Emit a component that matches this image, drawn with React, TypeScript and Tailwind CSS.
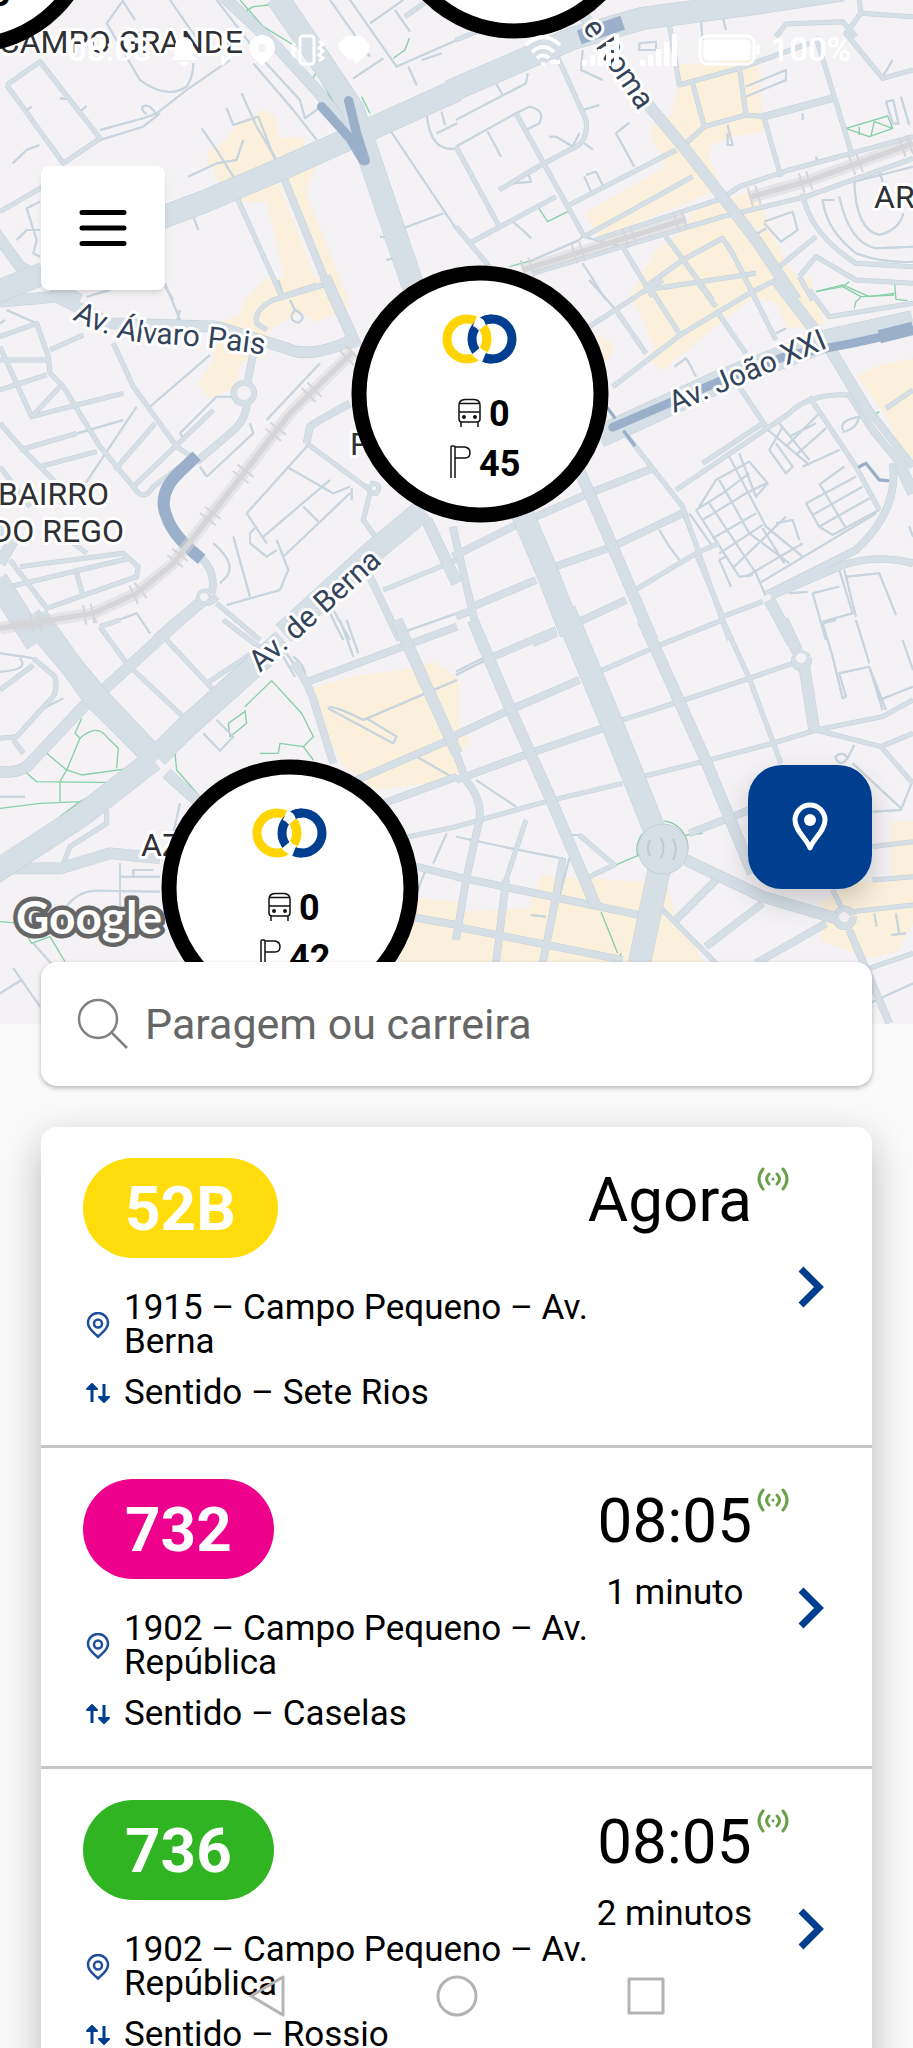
import { useState } from "react";

interface Departure {
  line: string;
  badge: string;
  time: string;
  wait?: string;
  stop: string;
  direction: string;
}

interface StopCluster {
  x: number;
  y: number;
  buses: number;
  stops: number;
}

interface MapTile {
  x: number;
  y: number;
  areas: string[];
  paths?: string[];
  lanes: string[];
  streets: string[];
  avenues: string[];
  roads: string[];
  mains: string[];
  rails?: string[];
  tunnels?: [string, number][];
}

const departures: Departure[] = [
  {
    line: "52B",
    badge: "bg-[#ffdc0a]",
    time: "Agora",
    stop: "1915 – Campo Pequeno – Av. Berna",
    direction: "Sete Rios",
  },
  {
    line: "732",
    badge: "bg-[#ec008c]",
    time: "08:05",
    wait: "1 minuto",
    stop: "1902 – Campo Pequeno – Av. República",
    direction: "Caselas",
  },
  {
    line: "736",
    badge: "bg-[#30b422]",
    time: "08:05",
    wait: "2 minutos",
    stop: "1902 – Campo Pequeno – Av. República",
    direction: "Rossio",
  },
];

const clusters: StopCluster[] = [
  { x: -30, y: -76, buses: 0, stops: 45 },
  { x: 514, y: -90, buses: 0, stops: 38 },
  { x: 480, y: 394, buses: 0, stops: 45 },
  { x: 290, y: 888, buses: 0, stops: 42 },
];

// Tile geometry is stored at three times the map's own scale
const tiles: MapTile[] = [
  {
    x: 0,
    y: 0,
    areas: [
      "M720 370L790 335L820 350L835 420L910 415L910 445L720 540L660 550L645 500L625 490L630 455L680 425Z",
      "M690 600L830 545L945 850L930 900L740 900L800 860L860 850L830 700L800 600Z",
      "M865 530L945 500L910 570L1040 900L1000 900Z",
    ],
    paths: [
      "M720 0L790 80L885 138M735 35L760 20L805 15M930 250L950 215L1025 355L1050 355M950 215L920 170M1180 175L1215 150L1228 115M1085 290L1110 340",
    ],
    lanes: [
      "M300 390L430 355L470 340L560 270L690 180M300 420L430 380L480 340M470 345Q450 310 430 318Q420 330 440 342",
      "M38 490L80 450L118 435M605 385L650 450L700 530M565 530L650 490L710 480L730 420",
      "M680 325L700 375L775 350L825 480M725 280L770 380L830 480M370 0L320 70L420 240Q500 300 560 260Q580 230 580 190",
      "M370 5L405 60M510 0L600 130M650 0L780 170L900 300L915 355L990 300M760 190L880 330L950 420",
      "M1050 0L1190 200L1371 120M1110 70L1210 0M1060 235L1150 175M1185 30L1230 95M1225 200L1250 255M990 0L1110 170",
      "M1170 390L1371 690M1210 685L1330 640M1280 340Q1290 460 1371 445M1310 400L1371 370M1325 335L1335 375",
      "M120 605L80 625L110 720L100 760L120 770M50 720L80 690L120 690M580 650L595 690M495 860L520 900M180 295L200 297M80 330L95 320M240 335L260 318",
      "M1140 710L1155 712M1160 780L1180 775M1265 180L1325 160",
    ],
    streets: [
      "M20 255L190 490L300 415L120 185L20 255M0 635L130 560M710 590L845 890L950 855M1371 -60L1215 50",
    ],
    avenues: ["M850 530L1000 900"],
    roads: ["M670 -10L830 140L950 270L1070 420", "M-20 690L60 800L240 900M-20 890L160 820"],
    mains: ["M480 655L600 610L860 500L1050 415L1371 270", "M830 -10L960 180L1060 330L1100 450L1240 860"],
    tunnels: [
      ["M965 320L1050 415L1090 482", 28],
      ["M1046 302L1070 400L1096 482", 28],
    ],
  },
  {
    x: 456,
    y: 0,
    areas: [
      "M670 200L900 180L920 390L830 405L760 430L755 480L790 560L700 600L430 710L395 640L640 500L600 430L590 385L650 350L665 280Z",
      "M710 640L880 580L920 640L980 780L1030 850L1000 890L520 900L600 760L690 690Z",
    ],
    paths: [
      "M245 620L275 665L335 635M1170 385L1295 348L1310 385L1240 410ZM1210 380L1210 405M1255 365L1245 408M1255 365L1310 385",
      "M1080 875L1160 855L1240 890L1315 880M160 800L235 780",
    ],
    lanes: [
      "M0 360L210 250L215 220M120 250L140 285M0 440L180 340L220 320Q270 330 250 370L210 390M95 395L135 470",
      "M380 330L430 315M385 430L410 448M280 410L300 410L350 440L370 400M480 400L520 368M480 400L535 500M390 525L420 515L440 555M385 530L405 575",
      "M130 570L215 515L225 545L175 550M170 665L200 690L225 715M380 150L375 210L440 240M550 130L600 125L600 150L550 150Z",
      "M735 60L740 120M800 50L810 90M815 375L830 435L815 435L815 400M870 290L990 240L990 210L870 260M1040 340L1040 360M1080 470L1085 490",
      "M1290 305L1310 370L1328 372L1312 300L1290 305M1335 290L1360 375M1135 600L1100 600Q1110 690 1200 760Q1280 790 1371 785",
      "M1150 590Q1180 730 1260 745L1371 740M1195 545Q1200 690 1270 705Q1330 690 1342 640M925 665L1010 635L1025 690L975 725L925 670M890 710L930 685",
      "M380 790L450 900M230 780L370 720L385 700M1195 545L1371 500M1270 510L1280 545M1280 230L1310 180M500 740L420 720L380 710",
    ],
    streets: [
      "M300 160L390 360Q400 430 340 450L255 495L130 570M0 440L130 680M40 730L300 590M0 680L100 800M180 340L385 710M330 620L660 450",
      "M640 70L670 255L850 205L1060 130M710 250L745 380L690 430M745 380L870 345L850 200M870 345L930 350M920 340L975 530M1080 110L1190 470",
      "M385 710L710 530M420 720L800 595L850 560L1000 510L1371 410M230 820L800 650L1050 590L1371 475M500 740L590 890M630 710L770 900M900 820L570 870",
      "M960 110L990 72L1160 65L1200 110M1210 0L1215 40L1371 50M1215 40L1170 100L1280 235L1371 210M1040 580Q1060 700 1200 790L1371 800",
      "M1030 830L1080 770L1200 840L1371 850M1030 830L1070 900M970 800L1080 710M570 860L680 780L800 715L830 760L900 900M0 120L150 60",
    ],
    avenues: ["M925 350L1130 295"],
    roads: ["M350 0L540 270L690 450L900 720L1020 900"],
    mains: ["M-20 275L350 115L560 55L900 10L1160 -30"],
    rails: ["M200 810L690 658", "M880 592L1050 545L1371 430"],
    tunnels: [["M370 112L500 68", 44]],
  },
  {
    x: 0,
    y: 280,
    areas: ["M740 60L800 0L1000 0L1045 80L950 120L900 90L800 150L790 230L720 240L700 320L630 350L600 310L650 240L640 140L720 110Z"],
    lanes: [
      "M620 590L600 560M620 590L760 460L750 430M800 420L960 250M450 380L630 225M540 460L650 350L700 350M540 460L550 475",
      "M920 500L740 700L800 790M750 760L750 790L800 830L830 810M750 760L765 745M1050 620L1000 640L860 560M1055 625L1055 660M990 600L790 770M910 680L960 730M850 830L1050 640M830 780L865 870L840 930L680 975",
      "M700 770L750 950M640 790Q710 850 680 890L660 910M300 1040L410 1000L450 1060M300 1040L330 1080M990 1000L1030 1080M1000 990L1050 1080",
      "M20 90L110 130M0 130L15 120M495 10L540 120M540 90L530 130M260 50L330 30M60 510L370 420M250 620L410 380M1200 1060L1371 1000",
      "M835 0L850 50L930 20M870 60L885 90Q860 120 895 128Q925 110 885 90",
    ],
    streets: [
      "M340 190L400 320L530 500L590 540M0 170L110 130L145 230L150 280L190 320L300 500L400 620Q430 670 460 620L540 560M0 240L140 240M0 330L140 285M150 210L250 165",
      "M0 200L95 410L180 320M95 410L230 375L370 340M0 430L70 510L200 640M60 510L230 460M120 560L290 515M345 570L465 430M400 620L640 390",
      "M30 840L140 985L410 890L415 860L370 820L60 860M30 920L240 870L390 835M230 880L250 950M650 970L780 1080M800 150L770 130Q760 90 820 60L970 15",
      "M920 490L1110 630M1110 640L1090 720L1140 790M1110 610Q1150 610 1130 640Q1100 640 1110 615M1150 930L1371 840M0 560L90 680M220 790L260 820",
    ],
    avenues: [
      "M760 220L740 320M740 370Q740 420 690 460L590 545M920 490L930 440L960 420L1050 370M1100 870L1200 1080M732 312A28 28 0 1 1 731 312M605 835Q650 880 635 940M635 940Q600 930 600 955Q620 980 650 950",
    ],
    roads: [
      "M0 65L170 50L330 130L650 140L860 205Q930 240 1070 175M975 -10L1070 200M610 960L470 1080M1280 720L1371 910M0 850L40 780L0 740",
    ],
    mains: ["M-20 40L130 -20M1270 690L1130 805L850 1060M-10 900L110 1090"],
    rails: ["M1060 215L870 400L700 620L520 850L410 940L280 1000L0 1045"],
    tunnels: [["M590 528L540 575Q470 640 500 710Q520 770 605 838", 36]],
  },
  {
    x: 456,
    y: 280,
    areas: [
      "M540 60L650 0L1060 0L1100 130L1000 140L960 60L880 50L620 265L590 240L600 200L560 110Z",
      "M1210 290L1260 265L1371 240L1371 540L1340 500L1290 400Z",
      "M430 170L470 200L450 240Z",
    ],
    paths: ["M1080 35L1160 20L1215 50L1315 45M1195 85L1200 65L1215 52M1160 20L1180 5M1315 0L1320 58L1355 62M1240 415L1270 395"],
    lanes: [
      "M720 690L800 640L880 580M740 720L870 640L930 610M770 775L900 700M790 820L920 735M830 865L990 710M870 890L1040 790M910 910L1260 700",
      "M720 690L850 890L890 885M760 670L900 880L930 950M790 600L880 760L1000 850M820 530L930 740L1040 830M850 520L900 650L935 610L880 545L780 600L730 680",
      "M790 840L825 920M790 840L810 830M940 510L990 580L1010 560L960 490M940 510L980 440M1000 470L1080 430M990 500L1090 400M1020 525L1110 445M1040 560L1150 510",
      "M930 445L1060 555M970 430L1060 540M1000 400M1050 670L1090 740L1130 765L1270 690M1050 670L1200 590M1090 610L1170 745M1070 705L1220 620M1090 740L1240 655M1095 610L1165 560",
      "M610 750L640 800L670 840M1150 870L1190 1000L1100 1025M1070 940L1150 920M1070 940L1110 1080M1170 890L1270 880L1320 1005M1165 870L1200 1010M1055 935L1000 940",
      "M700 250L720 290M655 260L690 235L700 250M1160 450Q1150 420 1210 410Q1200 450 1160 455M960 160L990 145M400 0L480 90M680 700L720 800M700 700L770 800M1360 740L1371 770",
      "M960 730L1010 720L1030 780M920 745L985 850",
    ],
    streets: [
      "M500 450L680 680L820 1080M470 320L680 160L880 40L960 0M400 140L570 30L620 0M580 20L670 160M720 0L780 80M480 90L570 220M870 0L960 180M780 90L870 220M850 320L930 440",
      "M660 630L1000 400Q1060 340 1180 345M740 550L920 430M1060 350L1200 560L1270 690M520 940L720 820L790 790M720 820L800 1010M800 1010L920 965M1060 30L1120 110L1371 70M1290 385L1371 330",
    ],
    avenues: [
      "M-10 830L170 740L400 640L590 565M270 870L470 800L680 700M-10 740L60 1040L90 1100M50 980L240 900M360 1030L510 960M0 1010L50 990M940 950L1150 860Q1250 820 1371 850",
      "M1180 340L1250 450L1340 560M1200 340L1371 560M1310 550Q1330 690 1200 810L930 945M230 1090L300 1060",
    ],
    roads: ["M370 570L470 800L590 1080M960 0L1130 220L1250 420M1330 550L1371 640M940 960L1010 1090"],
    mains: ["M430 470L800 300L1100 185L1371 125M190 680L275 880L345 1060"],
    tunnels: [
      ["M470 442L800 300L1000 225L1190 190L1371 150", 26],
      ["M1270 170L1371 145", 40],
      ["M1210 560L1230 550L1270 600L1295 602", 10],
      ["M505 455L535 495M455 385L475 412", 10],
    ],
  },
  {
    x: 0,
    y: 620,
    areas: [
      "M930 210L1080 170L1240 150L1300 130L1371 180L1371 480L1240 490L1130 505L1030 430L980 330Z",
      "M1250 840L1371 850L1371 1030L1210 1030L1200 960Z",
    ],
    paths: [
      "M735 260L815 182L905 280L940 350L910 380L840 370L835 400L780 400M910 380L940 420M735 270L740 310L690 350L685 310L735 275",
      "M525 400L530 450L600 530M245 295L225 340L240 355L200 450L180 485L180 545M240 355Q290 310 320 350L355 385L350 445M140 400L200 450L245 465L390 445",
      "M70 450L110 485L350 488L390 450M0 565L120 550L240 545L350 488M80 690L75 660L120 650L180 590L240 545M0 905L60 910L95 970L150 950L195 1025",
    ],
    lanes: [
      "M610 340L660 392L700 350L650 300M0 100L100 115M60 115Q90 150 0 155M110 275L190 235M400 770L400 750L460 750M360 730L360 860M360 770L480 770M0 530L75 530M540 550L520 640",
      "M180 890Q220 810 300 812L480 815M40 1045L120 1160M0 1120L65 1080M100 970L180 1060M985 265Q990 250 1090 300L1371 180M985 265L1180 370L1190 350L1100 295M1250 410L1371 480",
      "M860 100L920 190M880 110Q920 140 915 175M1020 0L1060 110M1040 0L1075 100M1280 740L1250 820M1340 640L1300 730M850 110L885 170",
    ],
    streets: [
      "M500 60L640 210M400 150L560 300M620 190L770 90M300 20L380 130M300 20L360 0M670 0L790 90M100 115L165 170Q175 220 150 240L50 350L0 355M40 360L70 400M0 210L100 135",
      "M190 730L210 680L320 610L320 570M1180 660L1371 620",
    ],
    avenues: ["M1070 480L1371 350M910 190L1371 20M1150 550L1371 470M1250 740L1371 770M1230 890L1371 915M880 130Q930 190 950 270L1000 430"],
    roads: [
      "M540 0L310 210M260 250L80 440Q50 460 0 455M0 745L180 745L330 700L480 715M500 460L600 550M1190 0L1371 400",
    ],
    mains: ["M110 -10L280 230L460 410", "M470 410L560 320L850 60M460 420L240 590L-20 760", "M90 -10L300 240L470 420"],
  },
  {
    x: 456,
    y: 620,
    areas: [
      "M0 880L230 870L230 840L260 770L400 780L550 790L630 800L650 880L740 1030L0 1030Z",
      "M1310 610L1371 610L1371 900L1320 990L1240 1010L1100 960L1100 850L1200 790L1310 790Z",
      "M0 280L10 340L40 360L0 400Z",
    ],
    paths: [
      "M625 603A80 80 0 0 1 695 690M690 645L740 640M545 710A80 80 0 0 1 560 640M480 735L550 705M435 875L485 1000M495 1000L490 1020",
    ],
    lanes: [
      "M1100 10L1130 110L1160 235L1170 230L1150 160L1240 140L1280 270M1200 0L1240 130M1240 140L1290 270M1270 240L1371 200M1340 60L1371 150M1100 10L1140 0",
      "M60 480L180 560M1190 430L1335 565M1138 410Q1160 390 1175 415Q1150 445 1138 410M1195 375L1175 415M1320 880L1330 945M1305 945L1350 940M1255 880L1262 920M225 885L270 890M0 650L140 680L330 718",
      "M0 165L90 120M0 155L80 115M340 645L370 645L475 735M210 600L150 780M325 715L295 830M340 715L310 830M1250 575L1335 570L1371 480M1240 1150L1371 1090",
    ],
    streets: [
      "M430 155L600 80L800 0M500 300L670 245L880 175L1010 130M560 470L740 425L950 370L1080 330L1280 290L1371 240M800 0L880 175L975 430M0 620L270 545L500 490",
      "M1080 330L1275 380L1371 340M1275 380L1371 490M610 860L780 1030M1240 1045L1371 1000M1190 875L1371 855M1130 810L1160 870M1250 680L1371 665M1250 780L1371 770M210 600L150 780M400 770L475 735L370 645",
    ],
    avenues: [
      "M100 115L300 30M0 345L150 275L370 180M0 480L220 400L440 325M0 400L30 480Q80 540 70 600L30 780L0 960M0 770L550 885M0 920L500 1020M150 780L120 1030M320 715L300 830L260 1030",
      "M700 640L830 590L880 570M780 780L660 900M920 850L750 980M1110 910L900 1030M1180 930L1300 1210M1055 115A20 20 0 1 1 1054 113M1190 890A25 25 0 1 1 1189 886",
    ],
    roads: ["M50 0L160 260L290 550L420 860M560 0L740 400L890 760M980 0L1025 95M1045 140L1075 330M690 720L920 830L1140 895M610 740L545 1040"],
    mains: ["M325 -30L480 340L600 640L610 700", "M620 700L550 1030"],
  },
];

const layers: { key: "lanes" | "streets" | "avenues" | "roads" | "mains"; width: number }[] = [
  { key: "lanes", width: 6 },
  { key: "streets", width: 12 },
  { key: "avenues", width: 20 },
  { key: "roads", width: 32 },
  { key: "mains", width: 66 },
];

function BusIcon() {
  return (
    <g fill="none" stroke="#111" strokeWidth="1.5">
      <path d="M-21 11Q-21 6 -15 5.500H-6Q0 6 0 11V25Q0 28 -3 28H-18Q-21 28 -21 25ZM-21 9.500H0M-21 18H0M-19 28V33M-2 28V33" />
      <circle cx="-16" cy="23" r="1.200" fill="#111" />
      <circle cx="-5" cy="23" r="1.200" fill="#111" />
    </g>
  );
}

function Cluster({ x, y, buses, stops }: StopCluster) {
  return (
    <g transform={`translate(${x} ${y})`}>
      <circle r="121" fill="#fff" stroke="#000" strokeWidth="15" />
      <g fill="none" strokeWidth="9">
        <circle cx="-13" cy="-55" r="20" stroke="#ffd400" />
        <circle cx="12" cy="-55" r="20" stroke="#003e8f" />
        <path d="M-5 -73A20 20 0 0 1 3 -67M5 -37A20 20 0 0 1 -4 -43" stroke="#fff" strokeWidth="11" />
        <path d="M4 -65A20 20 0 0 1 4 -45" stroke="#ffd400" />
        <path d="M4 -73.500A20 20 0 0 1 12 -75" stroke="#003e8f" />
        <path d="M4 -36.500A20 20 0 0 0 12 -35" stroke="#003e8f" />
      </g>
      <BusIcon />
      <path
        d="M-29 84V53Q-29 52 -28 52H-26Q-25 52 -25 53V84M-25 53H-15Q-10 54 -10 58.500Q-10 64 -15 64H-25"
        fill="none"
        stroke="#111"
        strokeWidth="1.5"
      />
      <text x="9" y="32" fontSize="36" fontWeight="700">
        {buses}
      </text>
      <text x="-1" y="82" fontSize="36" fontWeight="700">
        {stops}
      </text>
    </g>
  );
}

function CityMap() {
  return (
    <svg
      viewBox="0 0 913 1024"
      preserveAspectRatio="xMidYMin slice"
      className="absolute inset-x-0 top-0 h-[1024px] w-full bg-[#f4f2f4] font-[Roboto,sans-serif]"
      role="img"
      aria-label="Mapa de paragens"
    >
      {tiles.map((t) => (
        <g key={`${t.x}-${t.y}`} transform={`translate(${t.x} ${t.y}) scale(0.3333)`} fill="#faf0dc">
          {t.areas.map((d) => (
            <path key={d} d={d} stroke="#faf0dc" strokeWidth="10" strokeLinejoin="round" />
          ))}
          {t.paths?.map((d) => (
            <path key={d} d={d} fill="none" stroke="#86cfa8" strokeWidth="4" strokeLinejoin="round" />
          ))}
        </g>
      ))}

      {/* dark casing first, then the road surface, so that crossings merge */}
      {layers.map(({ key, width }) => (
        <g key={key} fill="none" strokeLinejoin="round">
          {["#c3d0d9", "#d6dfe6"].map((color, pass) =>
            tiles.map((t) => (
              <g
                key={`${color}-${t.x}-${t.y}`}
                transform={`translate(${t.x} ${t.y}) scale(0.3333)`}
                stroke={key === "lanes" ? "#c9d5de" : color}
                strokeWidth={pass === 0 && key !== "lanes" ? width + 3 : width}
              >
                {t[key].map((d) => (
                  <path key={d} d={d} />
                ))}
              </g>
            )),
          )}
        </g>
      ))}

      <circle cx="663" cy="849" r="25" fill="#d6dfe6" stroke="#c3d0d9" />
      <path d="M650 840Q646 848 650 856M661 838Q666 848 661 858M673 839Q679 849 673 860" fill="none" stroke="#bccad4" strokeWidth="2" />
      <circle cx="244" cy="393" r="7" fill="#f4f2f4" />
      <circle cx="204" cy="597" r="4" fill="#f4f2f4" />
      <circle cx="768" cy="597" r="3" fill="#f4f2f4" />
      <circle cx="801" cy="658" r="5" fill="#f4f2f4" />
      <circle cx="844" cy="917" r="5" fill="#f4f2f4" />

      {tiles.map((t) => (
        <g key={`${t.x}-${t.y}`} transform={`translate(${t.x} ${t.y}) scale(0.3333)`} fill="none">
          {t.tunnels?.map(([d, width]) => (
            <path key={d} d={d} stroke="#9aafca" strokeWidth={width} strokeLinecap={width < 30 ? "round" : "butt"} />
          ))}
          {t.rails?.map((d) => (
            <g key={d} stroke="#d6d6d8">
              <path d={d} strokeWidth="36" strokeOpacity="0.5" />
              <path d={d} strokeWidth="16" />
              <path d={d} strokeWidth="60" strokeDasharray="6 18 6 130" />
            </g>
          ))}
        </g>
      ))}

      <g fill="#2e3033" stroke="#fff" strokeWidth="6" strokeLinejoin="round" fontSize="32" style={{ paintOrder: "stroke" }}>
        <text x="243" y="53" textAnchor="end">
          CAMPO GRANDE
        </text>
        <text x="109" y="505" textAnchor="end">
          BAIRRO
        </text>
        <text x="124" y="542" textAnchor="end">
          DO REGO
        </text>
        <text x="874" y="208">AREEIRO</text>
        <text x="350" y="455">PEQUENO</text>
        <text x="141" y="856">AZUL</text>
      </g>
      <defs>
        <path id="alvaro" d="M72 319Q118 343 160 344T300 360" />
      </defs>
      <g fill="#33435a" stroke="#fff" strokeWidth="6" strokeLinejoin="round" fontSize="30" style={{ paintOrder: "stroke" }}>
        <text>
          <textPath href="#alvaro">Av. Álvaro Pais</textPath>
        </text>
        <text transform="translate(674 413) rotate(-23)">Av. João XXI</text>
        <text transform="translate(260 673) rotate(-42)">Av. de Berna</text>
        <text transform="translate(582 27) rotate(56)">e Roma</text>
      </g>

      <text
        x="16"
        y="934"
        fontSize="46"
        fill="#fff"
        stroke="#666"
        strokeWidth="9"
        strokeLinejoin="round"
        className="font-[Lato,sans-serif] font-bold"
        style={{ paintOrder: "stroke" }}
      >
        Google
      </text>

      {clusters.map((c) => (
        <Cluster key={`${c.x}-${c.y}`} {...c} />
      ))}
    </svg>
  );
}

function SignalBars() {
  return (
    <svg viewBox="0 0 38 32" className="h-8 w-[38px]" fill="#fff">
      <path d="M0 26h5v6H0zM8 21h5v11H8zM16 15h5v17h-5zM24 8h5v24h-5zM32 0h5v32h-5z" />
    </svg>
  );
}

function StatusBar() {
  return (
    <div className="flex h-[100px] items-center justify-between pr-[62px] pl-[68px] text-[33px] font-medium text-white">
      <div className="flex items-center gap-3">
        <span className="mr-1">08:03</span>
        <svg viewBox="0 0 32 32" className="size-8" fill="#fff">
          <path d="M16 3a9 9 0 0 1 9 9v9l4 5H3l4-5v-9a9 9 0 0 1 9-9zM12 28h8a4 4 0 0 1-8 0z" />
        </svg>
        <svg viewBox="0 0 24 32" className="h-8 w-6" fill="none" stroke="#fff" strokeWidth="3">
          <path d="M5 10l13 12-7 7V3l7 7L5 22" />
        </svg>
        <svg viewBox="0 0 28 32" className="h-8 w-7" fill="#fff" fillRule="evenodd">
          <path d="M14 1a13 13 0 0 1 13 13c0 7-8 12-13 18C9 26 1 21 1 14A13 13 0 0 1 14 1zm0 9a4 4 0 1 0 0 8 4 4 0 0 0 0-8z" />
        </svg>
        <svg viewBox="0 0 38 32" className="h-8 w-[38px]" fill="none" stroke="#fff" strokeWidth="3">
          <rect x="12" y="2" width="14" height="28" rx="3" />
          <path d="M7 9L4 13l3 3-3 3 3 4M31 7l4 3-4 4 4 3-4 4 4 3-4 3" />
        </svg>
        <svg viewBox="0 0 32 30" className="h-8 w-8" fill="#fff">
          <path d="M8 1h15l8 7v9l-14 13-1-5-6-1L1 14V8z" />
        </svg>
      </div>
      <div className="flex items-center gap-5">
        <svg viewBox="0 0 38 32" className="h-8 w-[38px]" fill="none" stroke="#fff" strokeWidth="4">
          <path d="M2 11Q19-5 36 11M8 18Q19 8 30 18M13 24q6-5 12 0" />
          <path d="M17 30h4M26 28h10" />
        </svg>
        <SignalBars />
        <SignalBars />
        <div className="flex items-center gap-2">
          <svg viewBox="0 0 64 32" className="h-8 w-16" fill="none" stroke="#fff" strokeWidth="3">
            <rect x="2" y="2" width="54" height="28" rx="7" />
            <rect x="7" y="7" width="44" height="18" rx="3" fill="#fff" />
            <path d="M60 11v10" />
          </svg>
          <span>100%</span>
        </div>
      </div>
    </div>
  );
}

function LiveIcon() {
  return (
    <svg viewBox="0 0 32 24" className="h-6 w-8" fill="none" stroke="#6aa04a" strokeWidth="3" strokeLinecap="round">
      <path d="M6 2Q-2 12 6 22M12 7Q7 12 12 17M20 7Q25 12 20 17M26 2Q34 12 26 22" />
      <circle cx="16" cy="12" r="1.500" fill="#6aa04a" stroke="none" />
    </svg>
  );
}

function DepartureCard({ departure }: { departure: Departure }) {
  const { line, badge, time, wait, stop, direction } = departure;

  return (
    <li className="border-b-[3px] border-[#c6c6c6] bg-white">
      <a href={`#${line}`} className="flex h-[318px] items-stretch pt-[31px] pr-[39px] pl-[42px]">
        <div className="flex min-w-0 flex-1 flex-col items-start">
          <span
            className={`flex h-[100px] items-center rounded-full px-[42px] text-[62px] font-bold text-white ${badge}`}
          >
            {line}
          </span>
          <div className="mt-[33px] flex items-center gap-[14px]">
            <svg viewBox="0 0 24 26" className="ml-[3px] h-[26px] w-6 shrink-0" fill="none" stroke="#1f4f9c" strokeWidth="2.5">
              <path d="M12 24.500C8 20.500 2 17 2 11a10 10 0 0 1 20 0c0 6-6 9.500-10 13.500z" />
              <circle cx="12" cy="11.500" r="4" />
            </svg>
            <p className="text-[35px] leading-[34px]">{stop}</p>
          </div>
          <div className="mt-[17px] flex items-center gap-[14px]">
            <svg viewBox="0 0 24 20" className="ml-[3px] h-5 w-6 shrink-0" fill="#003e8f" stroke="#003e8f" strokeWidth="2">
              <path d="M6 19V2M18 1v17" strokeWidth="3" />
              <path d="M1 6l5-5 5 5zM13 14l5 5 5-5z" strokeLinejoin="round" />
            </svg>
            <p className="text-[35px] leading-[34px]">Sentido – {direction}</p>
          </div>
        </div>

        <div className="flex w-[194px] shrink-0 items-start justify-end">
          <div className="flex flex-col items-center">
            <p className="mt-[6px] text-[62px] leading-[72px]">{time}</p>
            {wait && <p className="mt-4 text-[35px] leading-[40px] whitespace-nowrap">{wait}</p>}
          </div>
          <div className="mt-[9px] ml-[5px]">
            <LiveIcon />
          </div>
        </div>

        <div className="flex w-11 shrink-0 items-center justify-center pb-[30px]">
          <svg viewBox="0 0 26 42" className="h-[42px] w-[26px]" fill="none" stroke="#003e8f" strokeWidth="7">
            <path d="M3 3l18 18L3 39" />
          </svg>
        </div>
      </a>
    </li>
  );
}

function NavigationBar() {
  return (
    <nav className="absolute inset-x-0 bottom-0 flex h-[104px] items-center justify-center gap-[147px]">
      <button type="button" aria-label="Voltar">
        <svg viewBox="0 0 42 42" className="size-[42px]" fill="none" stroke="#b3b3b3" strokeWidth="3" strokeLinejoin="round">
          <path d="M36 2v38L4 21z" />
        </svg>
      </button>
      <button type="button" aria-label="Início">
        <svg viewBox="0 0 42 42" className="size-[42px]" fill="none" stroke="#b3b3b3" strokeWidth="3">
          <circle cx="21" cy="21" r="19" />
        </svg>
      </button>
      <button type="button" aria-label="Recentes">
        <svg viewBox="0 0 42 42" className="size-[42px]" fill="none" stroke="#b3b3b3" strokeWidth="3" strokeLinejoin="round">
          <rect x="4" y="4" width="34" height="34" />
        </svg>
      </button>
    </nav>
  );
}

export default function App() {
  const [query, setQuery] = useState("");

  return (
    <main className="relative flex h-screen flex-col overflow-hidden bg-[#fafafa] font-[Roboto,sans-serif] text-black">
      <CityMap />

      <div className="relative flex min-h-0 flex-1 flex-col">
        <StatusBar />

        <div className="flex flex-col px-[41px] pt-[66px]">
          <button
            type="button"
            aria-label="Menu"
            className="flex size-[124px] items-center justify-center self-start rounded-lg bg-white shadow-md"
          >
            <svg viewBox="0 0 48 38" className="h-[38px] w-12" stroke="#000" strokeWidth="5" strokeLinecap="round">
              <path d="M3 3.500h42M3 19h42M3 34.500h42" />
            </svg>
          </button>

          <button
            type="button"
            aria-label="Minha localização"
            className="mt-[475px] flex size-[124px] items-center justify-center self-end rounded-[34px] bg-[#003e8f] shadow-[0_12px_28px_rgba(0,0,0,0.18)]"
          >
            <svg viewBox="0 0 36 50" className="h-[50px] w-9" fill="none" stroke="#fff" strokeWidth="5">
              <path d="M18 46C15 37 3 29 3 18a15 15 0 0 1 30 0c0 11-12 19-15 28z" strokeLinejoin="round" />
              <circle cx="18" cy="18" r="6" fill="#fff" stroke="none" />
            </svg>
          </button>

          <label className="mt-[73px] flex h-[124px] items-center gap-4 rounded-2xl bg-white pr-6 pl-9 shadow-[0_2px_5px_rgba(0,0,0,0.28)]">
            <svg viewBox="0 0 52 52" className="size-[52px] shrink-0" fill="none" stroke="#808080" strokeWidth="2.5">
              <circle cx="21" cy="21" r="19" />
              <path d="M35 35l15 15" />
            </svg>
            <input
              type="text"
              aria-label="Paragem ou carreira"
              placeholder="Paragem ou carreira"
              value={query}
              onChange={(e) => setQuery(e.target.value)}
              className="min-w-0 flex-1 bg-transparent text-[43px] placeholder-[#666] outline-none"
            />
          </label>
        </div>

        <div className="mt-[41px] min-h-0 flex-1 px-[41px]">
          <ul className="overflow-hidden rounded-2xl shadow-[0_14px_40px_rgba(0,0,0,0.26)]">
            {departures.map((d) => (
              <DepartureCard key={d.line} departure={d} />
            ))}
          </ul>
        </div>
      </div>

      <NavigationBar />
    </main>
  );
}
